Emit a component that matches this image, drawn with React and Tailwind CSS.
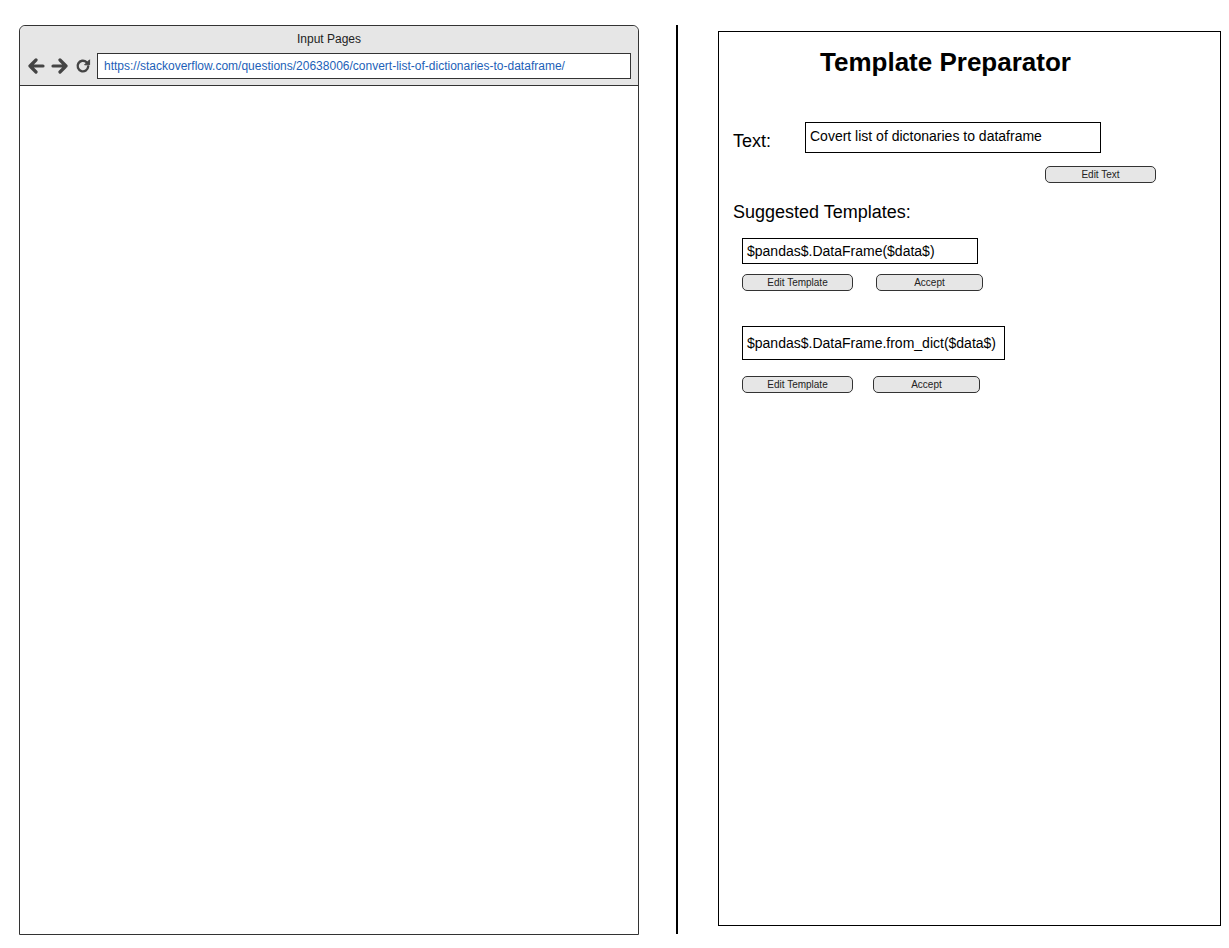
const FONT = { fontFamily: '"Liberation Sans", Arial, sans-serif' };

const Btn = ({ label, w, className = "" }) => (
  <div
    className={`flex h-[17px] items-center justify-center rounded-[5px] border border-[#333] bg-[#e6e6e6] text-[10px] leading-none text-[#222] ${className}`}
    style={{ width: w }}
  >
    {label}
  </div>
);

const Arrow = ({ flip }) => (
  <svg width="18" height="16" viewBox="0 0 18 16" className={flip ? "-scale-x-100" : ""}>
    <path d="M16 8H3M9 2L3 8l6 6" fill="none" stroke="#444" strokeWidth="3.2" strokeLinecap="round" strokeLinejoin="round" />
  </svg>
);

const Reload = () => (
  <svg width="16" height="16" viewBox="0 0 16 16">
    <path d="M13.2 8.5a5.3 5.3 0 1 1-1.7-4.4" fill="none" stroke="#444" strokeWidth="2.4" strokeLinecap="round" />
    <path d="M14.6 1.8v5H9.6z" fill="#444" stroke="#444" strokeWidth="1" strokeLinejoin="round" />
  </svg>
);

export default function App() {
  return (
    <div className="flex min-h-[948px] items-start bg-white pl-[19px] pt-[25px]" style={FONT}>
      {/* browser window */}
      <div className="flex h-[910px] w-[620px] flex-col rounded-t-[6px] border border-[#333]">
        <div className="flex h-[60px] flex-col rounded-t-[6px] border-b border-[#333] bg-[#e6e6e6]">
          <div className="pt-[5px] text-center text-[12px] leading-[16px] text-[#222]">Input Pages</div>
          <div className="mt-[6px] flex items-center pl-[7px] pr-[7px]">
            <Arrow />
            <span className="ml-[6px]">
              <Arrow flip />
            </span>
            <span className="ml-[6px]">
              <Reload />
            </span>
            <div className="ml-[6px] flex h-[26px] flex-1 items-center border border-[#333] bg-white pl-[6px] text-[12px] text-[#1d5fb8]">
              https://stackoverflow.com/questions/20638006/convert-list-of-dictionaries-to-dataframe/
            </div>
          </div>
        </div>
        <div className="flex-1 bg-white" />
      </div>

      {/* divider */}
      <div className="ml-[37px] h-[909px] w-[2px] bg-black" />

      {/* template preparator */}
      <div className="ml-[40px] mt-[6px] flex h-[895px] w-[503px] flex-col border border-black">
        <h1 className="pl-[101px] pt-[15px] text-[26px] font-bold leading-[30px] text-black">Template Preparator</h1>

        <div className="mt-[45px] flex items-start pl-[14px]">
          <span className="w-[72px] pt-[8px] text-[18px] leading-[22px] text-black">Text:</span>
          <div className="h-[31px] w-[296px] border border-black px-[4px] pt-[5px] text-[14px] leading-[16px] text-black">
            Covert list of dictonaries to dataframe
          </div>
        </div>

        <div className="mt-[13px] pl-[326px]">
          <Btn label="Edit Text" w={111} />
        </div>

        <div className="mt-[18px] pl-[14px] text-[18px] leading-[22px] text-black">Suggested Templates:</div>

        <div className="mt-[15px] flex flex-col pl-[23px]">
          <div className="flex h-[26px] w-[236px] items-center border border-black px-[4px] text-[14px] text-black">
            $pandas$.DataFrame($data$)
          </div>
          <div className="mt-[10px] flex">
            <Btn label="Edit Template" w={111} />
            <Btn label="Accept" w={107} className="ml-[23px]" />
          </div>
        </div>

        <div className="mt-[35px] flex flex-col pl-[23px]">
          <div className="flex h-[34px] w-[263px] items-center border border-black px-[4px] text-[14px] text-black">
            $pandas$.DataFrame.from_dict($data$)
          </div>
          <div className="mt-[16px] flex">
            <Btn label="Edit Template" w={111} />
            <Btn label="Accept" w={107} className="ml-[20px]" />
          </div>
        </div>
      </div>
    </div>
  );
}
